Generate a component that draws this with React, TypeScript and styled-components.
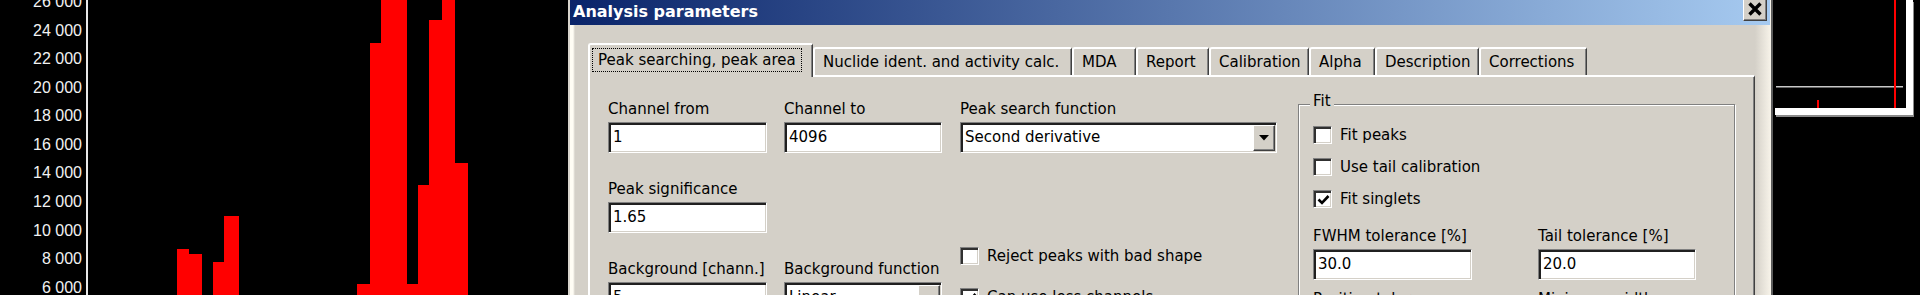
import React from "react";
import styled, { createGlobalStyle } from "styled-components";

const GlobalStyle = createGlobalStyle`
  html, body { margin: 0; padding: 0; background: #000; overflow: hidden; }
  #root { width: 1920px; height: 295px; overflow: hidden; }
`;

const Screen = styled.div`
  display: flex;
  width: 1920px;
  height: 295px;
  background: #000;
  overflow: hidden;
`;

/* ---------- spectrum chart (left) ---------- */
const Chart = styled.div`
  flex: 0 0 568px;
  display: flex;
  height: 295px;
  overflow: hidden;
`;

const AxisLabels = styled.div`
  flex: 0 0 82px;
  margin-top: -11.8px;
  display: flex;
  flex-direction: column;
  align-items: flex-end;
  font-family: "Liberation Sans", Arial, sans-serif;
  font-size: 16px;
  color: #f2f2f2;
`;

const AxisLabel = styled.div`
  height: 28.55px;
  line-height: 28.55px;
  white-space: nowrap;
`;

const Plot = styled.div`
  margin-left: 4px;
  border-left: 2px solid #e8e8e8;
  height: 295px;
  flex: 1;
`;

/* ---------- dialog ---------- */
const Dialog = styled.div`
  flex: 0 0 1205px;
  box-sizing: border-box;
  height: 295px;
  display: flex;
  flex-direction: column;
  border-left: 2px solid #d8d4cc;
  border-right: 2px solid #5c5c5c;
  background: linear-gradient(
    to right,
    #fffdf5 0,
    #fffdf5 3px,
    #d4d0c8 5px,
    #d4d0c8 calc(100% - 16px),
    #f8f4ea 100%
  );
  font-family: "DejaVu Sans", Verdana, sans-serif;
  font-size: 15px;
  color: #000;
`;

const TitleBar = styled.div`
  flex: 0 0 25px;
  margin-right: 1px;
  display: flex;
  align-items: flex-start;
  justify-content: space-between;
  padding: 0 3px 0 3px;
  background: linear-gradient(to right, #0a246a, #a6caf0);
`;

const TitleText = styled.div`
  font-weight: bold;
  font-size: 16px;
  line-height: 23px;
  color: #fff;
  white-space: nowrap;
`;

const CloseButton = styled.div`
  box-sizing: border-box;
  width: 24px;
  height: 21px;
  background: #d4d0c8;
  border-style: solid;
  border-width: 0 1px 1px 1px;
  border-color: #fff #404040 #404040 #fff;
  box-shadow: inset -1px -1px 0 #808080;
  display: flex;
  align-items: center;
  justify-content: center;
  padding-bottom: 3px;
`;

const DialogBody = styled.div`
  flex: 1;
  display: flex;
  flex-direction: column;
  padding: 18px 0 0 18px;
  overflow: hidden;
`;

const TabStrip = styled.div`
  display: flex;
  align-items: flex-end;
  height: 32px;
`;

const Tab = styled.div<{ $w: number; $active?: boolean }>`
  box-sizing: border-box;
  flex: 0 0 ${(p) => p.$w}px;
  height: ${(p) => (p.$active ? 34 : 28)}px;
  margin-bottom: ${(p) => (p.$active ? -2 : 0)}px;
  position: relative;
  z-index: ${(p) => (p.$active ? 2 : 1)};
  background: #d4d0c8;
  border-top: 2px solid #fff;
  border-left: 2px solid #fff;
  border-right: 1px solid #404040;
  box-shadow: inset -1px 0 0 #808080;
  border-top-left-radius: 3px;
  border-top-right-radius: 2px;
  padding-left: ${(p) => (p.$active ? 2 : 8)}px;
  line-height: 26px;
  white-space: nowrap;
  overflow: hidden;
`;

const FocusRect = styled.div`
  display: inline-block;
  margin-top: 3px;
  height: 24px;
  box-sizing: border-box;
  border: 1px dotted #000;
  padding: 0 5px;
  line-height: 22px;
`;

const Panel = styled.div`
  box-sizing: border-box;
  width: 1167px;
  flex: 1;
  border-top: 2px solid #fff;
  border-left: 2px solid #fff;
  border-right: 1px solid #404040;
  box-shadow: inset -1px 0 0 #808080;
  padding: 23px 0 0 18px;
  display: flex;
  align-items: flex-start;
`;

const Column = styled.div<{ $w: number; $ml?: number }>`
  flex: 0 0 ${(p) => p.$w}px;
  margin-left: ${(p) => p.$ml ?? 0}px;
  display: flex;
  flex-direction: column;
`;

const Field = styled.div<{ $mt?: number; $w?: number }>`
  display: flex;
  flex-direction: column;
  margin-top: ${(p) => p.$mt ?? 0}px;
  width: ${(p) => (p.$w ? `${p.$w}px` : "auto")};
`;

const Label = styled.div`
  height: 18px;
  line-height: 18px;
  margin-bottom: 4px;
  white-space: nowrap;
`;

const TextBox = styled.div`
  box-sizing: border-box;
  height: 31px;
  background: #fff;
  border: 1px solid;
  border-color: #808080 #fff #fff #808080;
  box-shadow: inset 2px 2px 0 #202020, inset -1px -1px 0 #d4d0c8;
  padding-left: 4px;
  line-height: 29px;
  white-space: nowrap;
  overflow: hidden;
  display: flex;
  align-items: stretch;
`;

const BoxText = styled.span`
  flex: 1;
  overflow: hidden;
`;

const DropButton = styled.div`
  box-sizing: border-box;
  flex: 0 0 22px;
  margin: 2px 1px 1px 0;
  background: #d4d0c8;
  border: 1px solid;
  border-color: #fff #404040 #404040 #fff;
  box-shadow: inset -1px -1px 0 #808080;
  display: flex;
  align-items: center;
  justify-content: center;
`;

const CheckRow = styled.div<{ $mt?: number }>`
  display: flex;
  align-items: center;
  gap: 8px;
  height: 20px;
  margin-top: ${(p) => p.$mt ?? 0}px;
  white-space: nowrap;
  line-height: 20px;
`;

const CheckBox = styled.div`
  box-sizing: border-box;
  flex: 0 0 19px;
  height: 18px;
  background: #fff;
  border: 1px solid;
  border-color: #808080 #fff #fff #808080;
  box-shadow: inset 2px 2px 0 #303030, inset -1px -1px 0 #d4d0c8;
  display: flex;
  align-items: center;
  justify-content: center;
  padding: 2px 0 0 2px;
`;

const GroupBox = styled.div`
  box-sizing: border-box;
  flex: 0 0 437px;
  margin: 4px 0 0 21px;
  height: 260px;
  border: 1px solid #808080;
  box-shadow: 1px 1px 0 #fff, inset 1px 1px 0 #fff;
  padding-left: 14px;
  display: flex;
  flex-direction: column;
`;

const Legend = styled.div`
  align-self: flex-start;
  margin: -13px 0 0 -3px;
  padding: 0 3px;
  height: 18px;
  line-height: 18px;
  background: #d4d0c8;
`;

const CheckList = styled.div`
  display: flex;
  flex-direction: column;
  gap: 12px;
  margin-top: 15px;
`;

const FieldRow = styled.div<{ $mt: number }>`
  display: flex;
  gap: 66px;
  margin-top: ${(p) => p.$mt}px;
`;

/* ---------- right mini view ---------- */
const RightPane = styled.div`
  flex: 1;
  height: 295px;
  display: flex;
  align-items: flex-start;
`;

const MiniFrame = styled.div`
  box-sizing: border-box;
  margin-left: 2px;
  width: 138px;
  height: 115px;
  border-right: 7px solid #fff;
  border-bottom: 7px solid #fff;
  box-shadow: 1px 2px 0 #8a8a8a;
`;

const bars = [
  { x: 89, w: 12, top: 249 },
  { x: 101, w: 13, top: 254 },
  { x: 125, w: 11, top: 262 },
  { x: 136, w: 15, top: 216 },
  { x: 269, w: 13, top: 284 },
  { x: 282, w: 11, top: 43 },
  { x: 293, w: 26, top: -5 },
  { x: 319, w: 11, top: 284 },
  { x: 330, w: 11, top: 185 },
  { x: 341, w: 13, top: 20 },
  { x: 354, w: 13, top: -5 },
  { x: 367, w: 13, top: 163 },
];

const labels = [
  "26 000",
  "24 000",
  "22 000",
  "20 000",
  "18 000",
  "16 000",
  "14 000",
  "12 000",
  "10 000",
  "8 000",
  "6 000",
];

const tabs = [
  { t: "Nuclide ident. and activity calc.", w: 259 },
  { t: "MDA", w: 64 },
  { t: "Report", w: 73 },
  { t: "Calibration", w: 100 },
  { t: "Alpha", w: 66 },
  { t: "Description", w: 104 },
  { t: "Corrections", w: 108 },
];

const Tick = () => (
  <svg width="13" height="12" viewBox="0 0 13 12">
    <path d="M1.5 5.5 L5 9 L11.5 2" fill="none" stroke="#000" strokeWidth="2.6" />
  </svg>
);

const Arrow = () => (
  <svg width="10" height="6" viewBox="0 0 10 6">
    <path d="M0 0 H10 L5 5.5 Z" fill="#000" />
  </svg>
);

const Check = ({ checked, label, mt }: { checked?: boolean; label: string; mt?: number }) => (
  <CheckRow $mt={mt}>
    <CheckBox>{checked ? <Tick /> : null}</CheckBox>
    <span>{label}</span>
  </CheckRow>
);

const Input = ({ label, value, mt, select, w }: { label: string; value: string; mt?: number; select?: boolean; w?: number }) => (
  <Field $mt={mt} $w={w}>
    <Label>{label}</Label>
    <TextBox>
      <BoxText>{value}</BoxText>
      {select ? (
        <DropButton>
          <Arrow />
        </DropButton>
      ) : null}
    </TextBox>
  </Field>
);

export default function App() {
  return (
    <>
      <GlobalStyle />
      <Screen>
        <Chart>
          <AxisLabels>
            {labels.map((l) => (
              <AxisLabel key={l}>{l}</AxisLabel>
            ))}
          </AxisLabels>
          <Plot>
            <svg width="480" height="295" viewBox="0 0 480 295">
              {bars.map((b, i) => (
                <rect key={i} x={b.x} y={b.top} width={b.w} height={300 - b.top} fill="#ff0000" />
              ))}
            </svg>
          </Plot>
        </Chart>

        <Dialog>
          <TitleBar>
            <TitleText>Analysis parameters</TitleText>
            <CloseButton>
              <svg width="16" height="14" viewBox="0 0 16 14">
                <path d="M2.5 1.5 L13.5 12.5 M13.5 1.5 L2.5 12.5" stroke="#000" strokeWidth="3.4" />
              </svg>
            </CloseButton>
          </TitleBar>
          <DialogBody>
            <TabStrip>
              <Tab $w={225} $active>
                <FocusRect>Peak searching, peak area</FocusRect>
              </Tab>
              {tabs.map((t) => (
                <Tab key={t.t} $w={t.w}>
                  {t.t}
                </Tab>
              ))}
            </TabStrip>
            <Panel>
              <Column $w={159}>
                <Input label="Channel from" value="1" />
                <Input label="Peak significance" value="1.65" mt={27} />
                <Input label="Background [chann.]" value="5" mt={27} />
              </Column>
              <Column $w={158} $ml={17}>
                <Input label="Channel to" value="4096" />
                <Input label="Background function" value="Linear" mt={107} select />
              </Column>
              <Column $w={317} $ml={18}>
                <Input label="Peak search function" value="Second derivative" select />
                <Check label="Reject peaks with bad shape" mt={93} />
                <Check label="Can use less channels" checked mt={21} />
              </Column>
              <GroupBox>
                <Legend>Fit</Legend>
                <CheckList>
                  <Check label="Fit peaks" />
                  <Check label="Use tail calibration" />
                  <Check label="Fit singlets" checked />
                </CheckList>
                <FieldRow $mt={18}>
                  <Input label="FWHM tolerance [%]" value="30.0" w={159} />
                  <Input label="Tail tolerance [%]" value="20.0" w={158} />
                </FieldRow>
                <FieldRow $mt={10}>
                  <Input label="Position tolerance" value="" w={159} />
                  <Input label="Minimum width" value="" w={158} />
                </FieldRow>
              </GroupBox>
            </Panel>
          </DialogBody>
        </Dialog>

        <RightPane>
          <MiniFrame>
            <svg width="131" height="108" viewBox="0 0 131 108">
              <rect x="1" y="86" width="127" height="1.5" fill="#c8c8c8" />
              <rect x="119" y="0" width="2" height="108" fill="#ff0000" />
              <rect x="42" y="100" width="2" height="8" fill="#ff0000" />
            </svg>
          </MiniFrame>
        </RightPane>
      </Screen>
    </>
  );
}
